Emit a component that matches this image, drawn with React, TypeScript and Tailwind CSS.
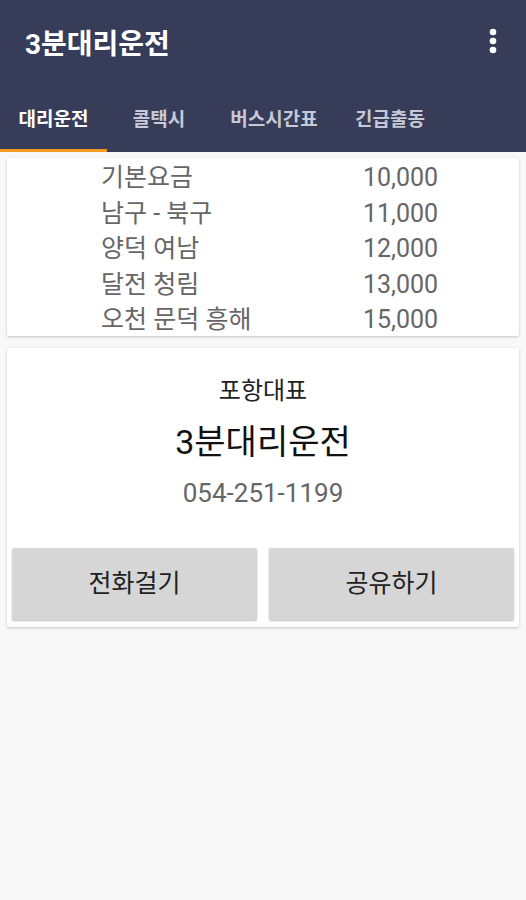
import React from "react";

const font = { fontFamily: 'Roboto, "Noto Sans CJK KR", sans-serif' };

const rows = [
  ["기본요금", "10,000"],
  ["남구 - 북구", "11,000"],
  ["양덕 여남", "12,000"],
  ["달전 청림", "13,000"],
  ["오천 문덕 흥해", "15,000"],
];

const tabs = [
  { label: "대리운전", w: "w-[107px]", active: true },
  { label: "콜택시", w: "w-[104px]", active: false },
  { label: "버스시간표", w: "w-[126px]", active: false },
  { label: "긴급출동", w: "w-[106px]", active: false },
];

export default function App() {
  return (
    <div className="w-[526px] h-[900px] bg-[#f8f8f8] flex flex-col" style={font}>
      <div className="bg-[#373c59] flex flex-col">
        <div className="h-[84px] flex items-center justify-between pl-[25px] pr-[28px]">
          <div className="text-white text-[28px] font-bold leading-none mt-[6px]">3분대리운전</div>
          <svg width="10" height="28" viewBox="0 0 10 28" className="-mt-[2px]">
            <circle cx="5" cy="5" r="3.3" fill="#ffffff" />
            <circle cx="5" cy="14" r="3.3" fill="#ffffff" />
            <circle cx="5" cy="23" r="3.3" fill="#ffffff" />
          </svg>
        </div>
        <div className="h-[68px] flex">
          {tabs.map((t) => (
            <div key={t.label} className={`${t.w} flex flex-col`}>
              <div
                className={`flex-1 flex items-center justify-center text-[19px] font-bold pt-[7px] ${
                  t.active ? "text-white" : "text-[#c7c9d6]"
                }`}
              >
                {t.label}
              </div>
              <div className={`h-[3px] ${t.active ? "bg-[#f39c1f]" : "bg-transparent"}`} />
            </div>
          ))}
        </div>
      </div>

      <div className="mx-[7px] mt-[6px] h-[178px] bg-white rounded-[2px] shadow-[0_1px_3px_rgba(0,0,0,0.22)] pt-[2px]">
        {rows.map(([a, b]) => (
          <div key={a} className="flex h-[35.5px] items-center text-[25px] text-[#666666] leading-none">
            <div className="pl-[94px] w-[356px]">{a}</div>
            <div>{b}</div>
          </div>
        ))}
      </div>

      <div className="mx-[7px] mt-[12px] bg-white rounded-[2px] shadow-[0_1px_3px_rgba(0,0,0,0.22)] flex flex-col items-center pt-[31px] pb-[7px] px-[5px]">
        <div className="text-[24px] text-[#222222] leading-none">포항대표</div>
        <div className="text-[34px] text-[#111111] leading-none mt-[22px]">3분대리운전</div>
        <div className="text-[26px] text-[#666666] leading-none mt-[21px]">054-251-1199</div>
        <div className="flex gap-[12px] w-full mt-[42px]">
          <button className="flex-1 h-[72px] bg-[#d6d6d6] rounded-[2px] shadow-[0_1px_2px_rgba(0,0,0,0.25)] text-[25px] text-[#222222]">
            전화걸기
          </button>
          <button className="flex-1 h-[72px] bg-[#d6d6d6] rounded-[2px] shadow-[0_1px_2px_rgba(0,0,0,0.25)] text-[25px] text-[#222222]">
            공유하기
          </button>
        </div>
      </div>
    </div>
  );
}
